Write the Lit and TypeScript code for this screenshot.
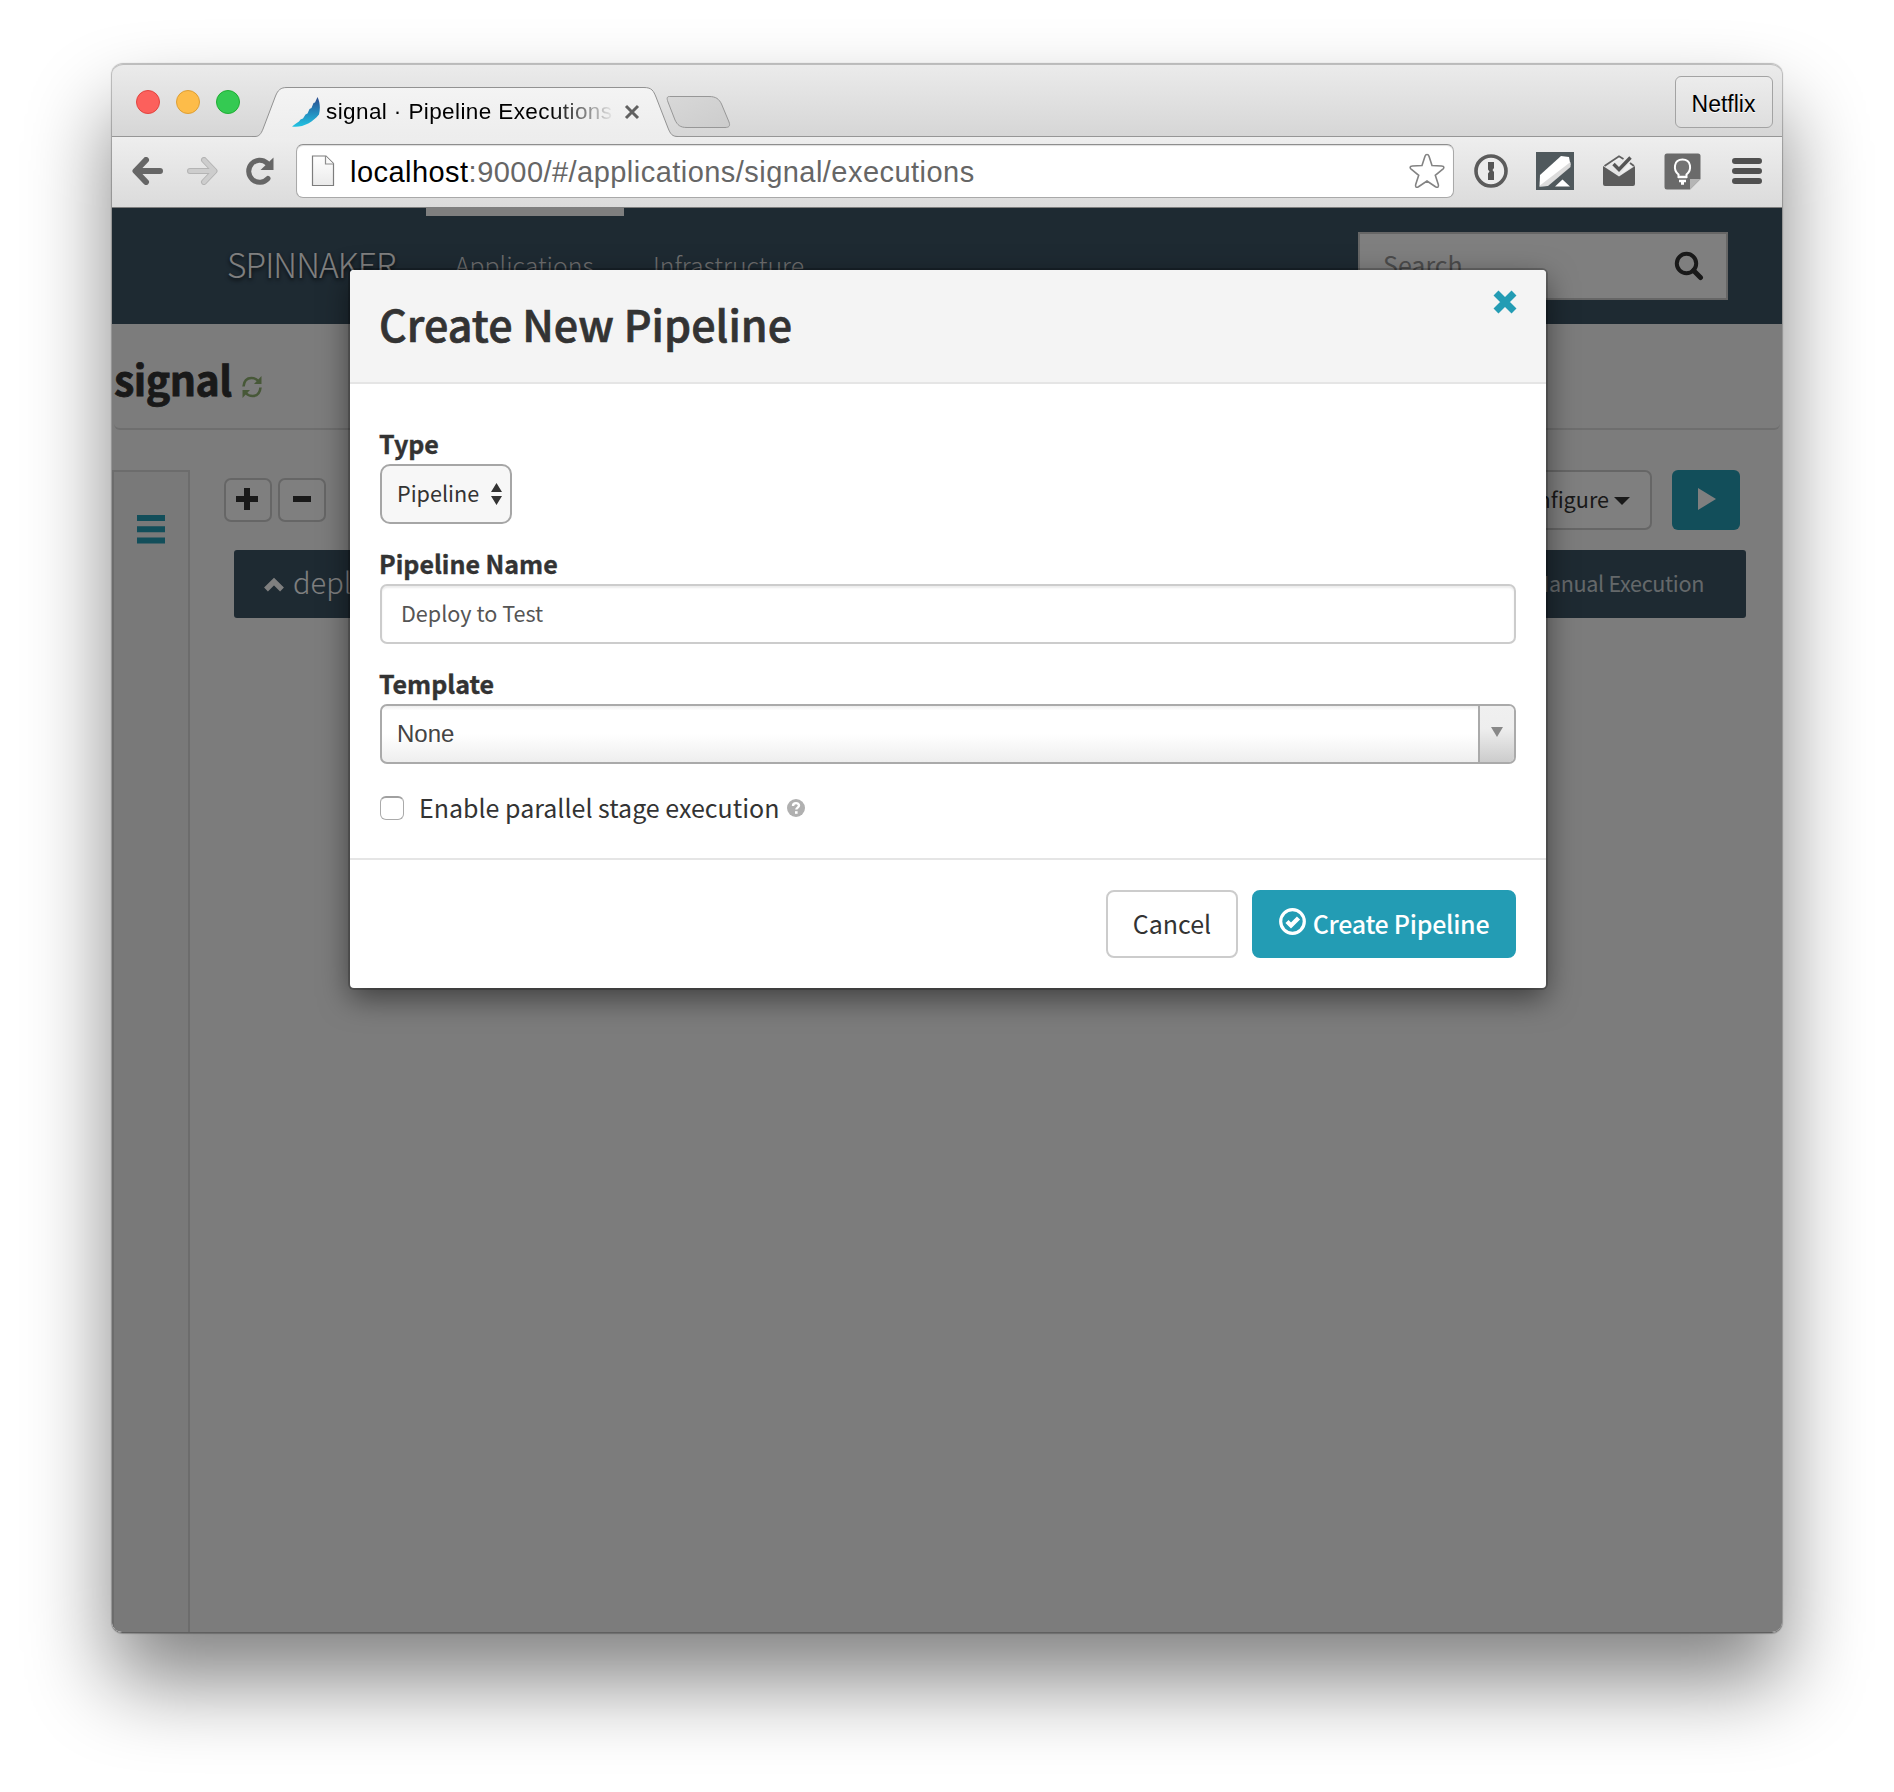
import { LitElement, html, css } from "lit";
import { customElement } from "lit/decorators.js";

const reset = css`
  :host { display: block; box-sizing: border-box; }
  *, *::before, *::after { box-sizing: border-box; }
  svg { display: block; flex: none; }
`;

@customElement("browser-bar")
class BrowserBar extends LitElement {
  static styles = [reset, css`
    :host { position: relative; font-family: "Liberation Sans", Arial, sans-serif; color: #000; }
    .strip {
      height: 73px; display: flex; align-items: flex-start; padding: 0 9px 0 24px;
      background: linear-gradient(#ebebeb, #d6d6d6); border-bottom: 1px solid #969696;
      border-top: 1px solid #bdbdbd; border-radius: 11px 11px 0 0;
    }
    .lights { display: flex; gap: 16px; margin-top: 25px; }
    .light { width: 24px; height: 24px; border-radius: 50%; border: 1px solid; }
    .close { background: #fc605c; border-color: #e2443f; }
    .min { background: #fdbc49; border-color: #de9f34; }
    .max { background: #34ca52; border-color: #1fae33; }
    .tab { position: absolute; left: 140px; top: 22px; }
    .tabtext {
      position: absolute; left: 180px; top: 32px; width: 362px; height: 32px;
      display: flex; align-items: center;
    }
    .title {
      width: 289px; margin-left: 6px; overflow: hidden; white-space: nowrap; line-height: 32px; font-size: 22.500px;
      letter-spacing: 0.4px; -webkit-mask-image: linear-gradient(90deg, #000 78%, transparent 100%);
    }
    .x { margin-left: 9px; }
    .profile {
      margin: 11px 0 0 auto; width: 98px; height: 52px; border: 1px solid #a3a3a3; border-radius: 6px;
      font-size: 23px; letter-spacing: 0; line-height: 54px; text-align: center; padding-right: 1px;
      background: linear-gradient(#ececec, #dedede); text-shadow: 0 1px #fff;
    }
    .tools {
      height: 71px; display: flex; align-items: center; padding: 0 0 2px 20px;
      background: linear-gradient(#eeeeee, #dbdbdb); border-bottom: 1px solid #7e7e7e;
    }
    .fwd { margin-left: 24px; }
    .rel { margin-left: 28px; }
    .omni {
      margin-left: 22px; width: 1158px; height: 54px; border: 1px solid #a9a9a9; border-radius: 7px;
      border-top-color: #8e8e8e; background: #fff; display: flex; align-items: center; padding: 0 8px 0 14px;
      font-size: 29px; letter-spacing: 0.46px; box-shadow: inset 0 1px 1px #ddd;
    }
    .url { margin-left: 15px; flex: 1; color: #666; line-height: 50px; padding-top: 2px; }
    .url b { font-weight: 400; color: #000; }
    .key { margin-left: 20px; }
    .pen { margin-left: 27px; }
    .mail { margin-left: 28px; }
    .keep { margin-left: 28px; }
    .menu { margin-left: 30px; }
  `];

  render() {
    return html`
      <div class="strip">
        <div class="lights"><i class="light close"></i><i class="light min"></i><i class="light max"></i></div>
        <div class="profile">Netflix</div>
      </div>
      <svg class="tab" width="490" height="52" viewBox="0 0 490 52">
        <defs>
          <linearGradient id="tg" x1="0" y1="0" x2="0" y2="1"><stop offset="0" stop-color="#f4f4f4"/><stop offset="1" stop-color="#ededed"/></linearGradient>
          <linearGradient id="ng" x1="0" y1="0" x2="1" y2="1"><stop offset="0" stop-color="#d8d8d8"/><stop offset="1" stop-color="#cccccc"/></linearGradient>
        </defs>
        <path d="M0 52V50.500H3C7 50.500 9 48 11 43L23.500 10C26 4 28.500 1.500 35 1.500H392C400 1.500 401.500 5 404 11L416 42C418.500 48 420 50.500 426 50.500V52Z" fill="url(#tg)"/>
        <path d="M0 50.500H3C7 50.500 9 48 11 43L23.500 10C26 4 28.500 1.500 35 1.500H392C400 1.500 401.500 5 404 11L416 42C418.500 48 420 50.500 426 50.500" fill="none" stroke="#929292"/>
        <path d="M417.500 10.500H457C464 10.500 467 13 469.500 18L477 36C478.500 40 477 41.500 473 41.500H435C428 41.500 425.500 39 423 34L416 16C414.500 12 415 10.500 417.500 10.500Z" fill="url(#ng)" stroke="#979797"/>
      </svg>
      <div class="tabtext">
        <svg width="28" height="32" viewBox="0 0 28 32">
          <defs><linearGradient id="sg" x1="0" y1="0" x2="0" y2="1"><stop offset="0" stop-color="#2b4a8c"/><stop offset=".5" stop-color="#2387bb"/><stop offset="1" stop-color="#22c3e2"/></linearGradient></defs>
          <path d="M25.500 1L23 6.500L21.500 7L19.500 12L17.500 13L15.500 17.500L13.500 18.500L11 22.500L8.500 23.500L7 25.500L4 27.500L0 30.500C10 32 20 27 27 18.500C28.500 12 28 6 25.500 1Z" fill="url(#sg)"/>
        </svg>
        <div class="title">signal · Pipeline Executions</div>
        <svg class="x" width="16" height="16" viewBox="0 0 16 16"><path d="M2 2L14 14M14 2L2 14" stroke="#616161" stroke-width="3"/></svg>
      </div>
      <div class="tools">
        <svg width="31" height="28" viewBox="0 0 31 28"><path d="M14 3L3.500 14L14 25M4 14H28" fill="none" stroke="#666" stroke-width="6" stroke-linecap="round" stroke-linejoin="round"/></svg>
        <svg class="fwd" width="31" height="28" viewBox="0 0 31 28"><path d="M17 3L27.500 14L17 25M27 14H3" fill="none" stroke="#b4b4b4" stroke-width="6" stroke-linecap="round" stroke-linejoin="round"/><path d="M17 3L27.500 14L17 25M27 14H3" fill="none" stroke="#cdcdcd" stroke-width="4" stroke-linecap="round" stroke-linejoin="round"/></svg>
        <svg class="rel" width="28" height="28" viewBox="0 0 28 28"><path d="M22 21.500A11 11 0 1 1 21 6" fill="none" stroke="#666" stroke-width="5" stroke-linecap="round"/><path d="M27.500 0.500V13H14.500Z" fill="#666"/></svg>
        <div class="omni">
          <svg width="24" height="32" viewBox="0 0 24 32"><defs><linearGradient id="pg" x1="0" y1="0" x2="0" y2="1"><stop offset="0" stop-color="#fff"/><stop offset="1" stop-color="#eaeaea"/></linearGradient></defs><path d="M1.500 1H15L22.500 8.500V30.500H1.500Z" fill="url(#pg)" stroke="#7d7d7d" stroke-width="1.200"/><path d="M14.500 1V9H22.500" fill="#fafafa" stroke="#8d8d8d" stroke-width="1.200"/></svg>
          <div class="url"><b>localhost</b>:9000/#/applications/signal/executions</div>
          <svg width="36" height="36" viewBox="0 0 36 36"><path d="M18 1.500C19 1.500 19.600 2 20 3.200L23 12.500L32.500 13C35.500 13.200 35.500 15 33.500 16.500L26.300 22.300L29.300 31.500C30 34.200 28.700 35 26.500 33.700L18 28L9.500 33.700C7.300 35 6 34.200 6.700 31.500L9.700 22.300L2.500 16.500C0.500 15 0.500 13.200 3.500 13L13 12.500L16 3.200C16.400 2 17 1.500 18 1.500Z" fill="#fff" stroke="#838383" stroke-width="1.600"/></svg>
        </div>
        <svg class="key" width="35" height="36" viewBox="0 0 35 36"><circle cx="17" cy="18" r="15" fill="#ececec" stroke="#5b5b5b" stroke-width="3.600"/><path d="M14 9H20V15L18.500 17L20 19V27H14V20.500L15.500 18.500L14 16.500Z" fill="#555"/></svg>
        <svg class="pen" width="38" height="38" viewBox="0 0 38 38"><path d="M0 0H38V38H0Z" fill="#50595d"/><path d="M4 23L25 4L33 5L34.500 13L11 34L3.500 34.500Z" fill="#fff"/><path d="M34.500 10V15L12 34L3.500 34.500L4.500 33Z" fill="#dcdcdc"/><path d="M26.500 27.500L34 34.500H19Z" fill="#fff"/></svg>
        <svg class="mail" width="34" height="34" viewBox="0 0 34 34"><path d="M1 12V30Q1 32 3 32H31Q33 32 33 30V12L17 22.500Z" fill="#5c5c5c"/><path d="M2.500 11.500L17 2L21 4.500M27.500 8.500L31.500 11.500L17 21.500Z" fill="#f0f0f0"/><path d="M2.500 12L17 2.200L21.500 5M28 9L32 12" fill="none" stroke="#606060" stroke-width="1.800"/><path d="M11.500 10L17 15.500L28.500 3.500" fill="none" stroke="#555" stroke-width="3.400"/></svg>
        <svg class="keep" width="37" height="37" viewBox="0 0 37 37"><path d="M3 0.500H34Q36.500 0.500 36.500 3V26L26 36.500H3Q0.500 36.500 0.500 34V3Q0.500 0.500 3 0.500Z" fill="#6a6a6a"/><path d="M36.500 26L26 36.500V26Z" fill="#b5b5b5"/><path d="M14.500 24V21.500C9 17 9.500 6.500 18.500 6.500S28 17 22.500 21.500V24Z" fill="#747474" stroke="#fff" stroke-width="2"/><path d="M14 24H23M15 28H22M17 30.500H20" stroke="#fff" stroke-width="2.500"/></svg>
        <svg class="menu" width="31" height="28" viewBox="0 0 31 28"><path d="M4 4H28M4 14H28M4 24H28" stroke="#505050" stroke-width="6" stroke-linecap="round"/></svg>
      </div>
    `;
  }
}

@customElement("app-page")
class AppPage extends LitElement {
  static styles = [reset, css`
    :host { background: #f8f8f8; font-family: "Noto Sans CJK SC", "Open Sans", sans-serif; color: #333; overflow: hidden; }
    .nav { height: 116px; background: #3c5465; display: flex; align-items: flex-start; color: #fff; }
    .brand {
      margin-left: 115px; width: 199px; line-height: 112px; font-size: 33.500px; letter-spacing: -0.900px; font-weight: 300;
      text-shadow: 0 2px 4px rgba(0, 0, 0, 0.8);
    }
    .item { font-size: 24.800px; font-weight: 300; color: #ddd; padding: 0 29px; line-height: 97px; border-top: 8px solid transparent; white-space: nowrap; }
    .active { border-color: #fff; width: 198px; }
    .search {
      margin: 24px 54px 0 auto; width: 370px; height: 68px; border: 2px solid #ccc; background: #fff;
      display: flex; align-items: flex-start; justify-content: space-between; padding: 0 22px 0 23px;
      font-size: 25px; line-height: 61px; color: #999;
    }
    .search svg { margin-top: 17px; }
    .head { height: 106px; margin: 0 2px; border-bottom: 2px solid #dcdcdc; border-radius: 0 0 6px 6px; display: flex; align-items: flex-start; padding-top: 24px; }
    h1 { margin: 0; font-size: 41px; line-height: 60px; font-weight: 700; letter-spacing: -0.500px; -webkit-text-stroke: 0.8px #333; }
    .head svg { margin: 27px 0 0 9px; }
    .main { display: flex; margin-top: 40px; height: 1164px; }
    .side { width: 78px; border: 2px solid #d8d8d8; background: #f2f2f2; padding: 43px 0 0 23px; }
    .content { flex: 1; padding-left: 34px; }
    .row { display: flex; height: 60px; align-items: center; padding-right: 42px; }
    .sq { width: 48px; height: 44px; border: 2px solid #ccc; border-radius: 7px; background: #fff; display: flex; align-items: center; justify-content: center; padding: 0 2px 2px 0; }
    .sq + .sq { margin-left: 6px; padding-right: 0; }
    .conf {
      margin: 0 20px 0 auto; height: 60px; width: 190px; border: 2px solid #ccc; border-radius: 7px; background: #fff;
      display: flex; align-items: center; justify-content: flex-end; gap: 5px; font-size: 21.600px; line-height: 53px; padding: 0 20px 3px 0;
    }
    .conf svg { margin-top: 5px; }
    .play { width: 68px; height: 60px; border-radius: 6px; background: #259cb4; display: flex; align-items: center; padding: 0 0 2px 26px; }
    .group {
      margin: 20px 36px 0 10px; height: 68px; border-radius: 3px; background: #3c5465; color: #fff; display: flex;
      align-items: center; padding: 0 42px 0 30px; font-size: 29px; font-weight: 300;
    }
    .group span { line-height: 60px; padding-bottom: 6px; margin-left: 9px; }
    .group .manual { margin-left: auto; font-size: 21.600px; letter-spacing: -0.350px; font-weight: 400; color: #c9d0d4; padding-bottom: 3px; }
  `];

  render() {
    return html`
      <div class="nav">
        <div class="brand">SPINNAKER</div>
        <div class="item active">Applications</div>
        <div class="item">Infrastructure</div>
        <div class="search">Search
          <svg width="30" height="30" viewBox="0 0 30 30"><circle cx="12.500" cy="12.500" r="9.700" fill="none" stroke="#333" stroke-width="4"/><path d="M19.500 19.500L26.500 26.500" stroke="#333" stroke-width="5" stroke-linecap="round"/></svg>
        </div>
      </div>
      <div class="head">
        <h1>signal</h1>
        <svg width="22" height="24" viewBox="0 0 22 24"><path d="M2.500 11.500C3 6 6 3 10.500 3C13.500 3 15.500 4 17.300 6M19.500 12.500C19 18 16 21 11.500 21C8.500 21 6.500 20 4.700 18" fill="none" stroke="#8fb070" stroke-width="2.600"/><path d="M20.500 1V9H13ZM1.500 23V15H9Z" fill="#8fb070"/></svg>
      </div>
      <div class="main">
        <div class="side"><svg width="28" height="29" viewBox="0 0 28 29"><path d="M0 3H28M0 14.200H28M0 25.500H28" stroke="#259cb4" stroke-width="6"/></svg></div>
        <div class="content">
          <div class="row">
            <div class="sq"><svg width="22" height="22" viewBox="0 0 22 22"><path d="M11 0V22M0 11H22" stroke="#333" stroke-width="6"/></svg></div>
            <div class="sq"><svg width="18" height="22" viewBox="0 0 18 22"><path d="M0 11H18" stroke="#333" stroke-width="6"/></svg></div>
            <div class="conf">Configure <svg width="16" height="8" viewBox="0 0 16 8"><path d="M0 0H16L8 8Z" fill="#333"/></svg></div>
            <div class="play"><svg width="18" height="22" viewBox="0 0 18 22"><path d="M0 0L18 11L0 22Z" fill="#fff"/></svg></div>
          </div>
          <div class="group">
            <svg width="20" height="15" viewBox="0 0 20 15"><path d="M2 12.500L10 4.500L18 12.500" fill="none" stroke="#fff" stroke-width="5.400"/></svg>
            <span>deploy</span><span class="manual">Start Manual Execution</span>
          </div>
        </div>
      </div>
    `;
  }
}

@customElement("pipeline-dialog")
class PipelineDialog extends LitElement {
  static styles = [reset, css`
    :host {
      width: 1196px; height: 718px; background: #fff; border-radius: 4px; overflow: visible; color: #333;
      box-shadow: 0 0 0 2px rgba(0, 0, 0, 0.2), 0 10px 30px rgba(0, 0, 0, 0.5);
      font-family: "Noto Sans CJK SC", "Open Sans", sans-serif; font-size: 25px;
    }
    .top { height: 114px; background: #f4f4f4; border-bottom: 2px solid #e5e5e5; border-radius: 4px 4px 0 0; display: flex; justify-content: space-between; padding: 0 29px; }
    h3 { margin: 0; font-size: 43px; letter-spacing: 0.050px; line-height: 106px; font-weight: 500; -webkit-text-stroke: 0.7px #333; }
    .top svg { margin-top: 20px; }
    .body { height: 476px; border-bottom: 2px solid #e5e5e5; padding: 44px 30px 0; }
    label { display: block; height: 36px; line-height: 30px; font-weight: 700; margin-left: -1px; -webkit-text-stroke: 0.4px #333; }
    .field { height: 60px; margin-bottom: 24px; border-radius: 7px; border: 2px solid #ccc; display: flex; align-items: center; }
    .select { width: 132px; border-color: #a6a6a6; border-radius: 10px; background: #f7f7f7; padding: 0 8px 0 15px; justify-content: space-between; font-size: 21.600px; }
    .select span, .input span { line-height: 50px; padding-bottom: 2px; }
    .input { padding-left: 19px; font-size: 21.600px; color: #555; box-shadow: inset 0 2px 2px rgba(0, 0, 0, 0.08); }
    .combo {
      border-color: #aaa; background: linear-gradient(#eee 0, #fff 8%, #fff 50%, #eee 100%); justify-content: space-between; padding-left: 15px;
      font-family: "Liberation Sans", Arial, sans-serif; font-size: 24px; color: #444; overflow: hidden;
    }
    .arrow { width: 36px; height: 56px; border-left: 2px solid #aaa; background: linear-gradient(#f0f0f0 0, #eee 40%, #ccc 100%); display: flex; align-items: center; justify-content: center; padding-bottom: 4px; }
    .check { display: flex; align-items: center; height: 40px; margin-top: -1px; }
    .box { width: 24px; height: 24px; border: 1px solid #aaa; border-radius: 6px; border-top: 2px solid #a0a0a0; margin: 1px 15px 0 0; }
    .check svg { margin: 1px 0 0 8px; }
    .foot { display: flex; justify-content: flex-end; gap: 14px; padding: 30px 30px 0; }
    .btn { height: 68px; border-radius: 8px; border: 2px solid #ccc; display: flex; align-items: center; justify-content: center; width: 132px; line-height: 62px; padding-bottom: 2px; white-space: nowrap; }
    .primary { width: 264px; background: #239cb4; border-color: #239cb4; color: #fff; gap: 7px; font-weight: 500; letter-spacing: -0.280px; }
    .primary svg { margin-bottom: 4px; }
  `];

  render() {
    return html`
      <div class="top">
        <h3>Create New Pipeline</h3>
        <svg width="24" height="24" viewBox="0 0 24 24"><path d="M3 3L21 21M21 3L3 21" stroke="#239cb4" stroke-width="7"/></svg>
      </div>
      <div class="body">
        <label>Type</label>
        <div class="field select"><span>Pipeline</span><svg width="11" height="22" viewBox="0 0 11 22"><path d="M5.500 0L11 9H0ZM5.500 22L11 13H0Z" fill="#333"/></svg></div>
        <label>Pipeline Name</label>
        <div class="field input"><span>Deploy to Test</span></div>
        <label>Template</label>
        <div class="field combo">None<div class="arrow"><svg width="12" height="10" viewBox="0 0 12 10"><path d="M0 0H12L6 10Z" fill="#888"/></svg></div></div>
        <div class="check"><i class="box"></i>Enable parallel stage execution
          <svg width="18" height="18" viewBox="0 0 18 18"><circle cx="9" cy="9" r="9" fill="#b0b0b0"/><path d="M6 7C6 3.300 12 3.300 12 6.600C12 8.600 9.300 8.600 9.300 10.600" fill="none" stroke="#fff" stroke-width="2.400"/><path d="M8 12.200H10.600V14.800H8Z" fill="#fff"/></svg>
        </div>
      </div>
      <div class="foot">
        <div class="btn">Cancel</div>
        <div class="btn primary"><svg width="27" height="27" viewBox="0 0 27 27"><circle cx="13.500" cy="13.500" r="11.800" fill="none" stroke="#fff" stroke-width="3.200"/><path d="M8 13.500L12 17.500L19.500 10" fill="none" stroke="#fff" stroke-width="4.400"/></svg>Create Pipeline</div>
      </div>
    `;
  }
}

@customElement("app-root")
class AppRoot extends LitElement {
  static styles = [reset, css`
    :host { width: 1894px; height: 1792px; background: #fff; padding: 64px 0 0 112px; overflow: hidden; }
    .window {
      position: relative; width: 1670px; height: 1569px; border-radius: 11px;
      box-shadow: 0 0 1px 1px rgba(0, 0, 0, 0.25), 0 48px 84px rgba(0, 0, 0, 0.49);
    }
    .view { position: relative; height: 1425px; overflow: hidden; border-radius: 0 0 10px 10px; border-bottom: 1px solid #606060; }
    .shade { position: absolute; inset: 0; background: rgba(0, 0, 0, 0.5); display: flex; align-items: flex-start; padding: 62px 0 0 238px; }
  `];

  render() {
    return html`
      <div class="window">
        <browser-bar></browser-bar>
        <div class="view">
          <app-page></app-page>
          <div class="shade"><pipeline-dialog></pipeline-dialog></div>
        </div>
      </div>
    `;
  }
}
